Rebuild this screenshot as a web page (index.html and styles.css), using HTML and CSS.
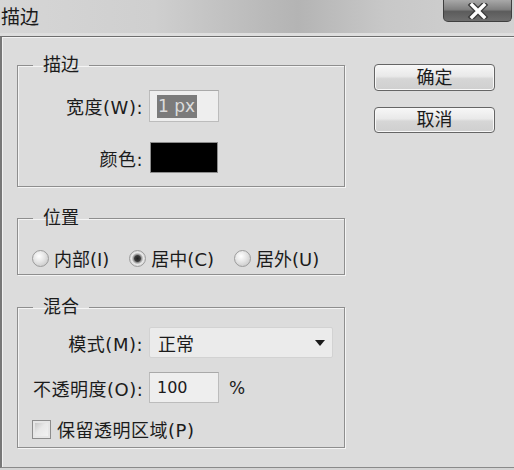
FILE: index.html
```html
<!DOCTYPE html>
<html lang="zh-CN">
<head>
    <meta charset="UTF-8">
    <meta name="viewport" content="width=device-width, initial-scale=1.0">
    <title>描边</title>
    <link rel="stylesheet" href="styles.css">
</head>
<body>
<div class="window">
    <div class="titlebar">
        <span class="title">描边</span>
        <span class="close-btn">
            <svg width="22" height="16" viewBox="0 0 22 16">
                <path d="M5 2 L17 14 M17 2 L5 14" stroke="#3a3a3a" stroke-width="6" stroke-linecap="square"/>
                <path d="M5 2 L17 14 M17 2 L5 14" stroke="#ffffff" stroke-width="3.4" stroke-linecap="square"/>
            </svg>
        </span>
    </div>

    <div class="dialog">
        <div class="groups">
            <fieldset class="group group-stroke">
                <legend>描边</legend>
                <div class="row row-width">
                    <span class="label">宽度(W):</span>
                    <span class="text-input"><span class="selected">1 px</span></span>
                </div>
                <div class="row row-color">
                    <span class="label">颜色:</span>
                    <span class="swatch"></span>
                </div>
            </fieldset>

            <fieldset class="group group-position">
                <legend>位置</legend>
                <div class="radios">
                    <span class="radio-item"><span class="radio"></span>内部(I)</span>
                    <span class="radio-item"><span class="radio checked"></span>居中(C)</span>
                    <span class="radio-item"><span class="radio"></span>居外(U)</span>
                </div>
            </fieldset>

            <fieldset class="group group-blend">
                <legend>混合</legend>
                <div class="row row-mode">
                    <span class="label">模式(M):</span>
                    <span class="select">正常<span class="arrow"></span></span>
                </div>
                <div class="row row-opacity">
                    <span class="label">不透明度(O):</span>
                    <span class="text-input">100</span>
                    <span class="unit">%</span>
                </div>
                <div class="check-row">
                    <span class="checkbox"></span>保留透明区域(P)
                </div>
            </fieldset>
        </div>

        <div class="buttons">
            <button class="btn btn-ok">确定</button>
            <button class="btn btn-cancel">取消</button>
        </div>
    </div>
</div>
</body>
</html>
```

FILE: styles.css
```css
body {
    margin: 0;
    background: #d4d4d4;
}

.window {
    width: 514px;
    height: 470px;
    font-family: "DejaVu Sans", "Noto Sans CJK SC", sans-serif;
    font-size: 18px;
    color: #1b1b1b;
    overflow: hidden;
}

/* title bar */
.titlebar {
    height: 36px;
    display: flex;
    justify-content: space-between;
    align-items: flex-start;
    background: linear-gradient(to right, #d6d6d6 0%, #cfcfcf 30%, #b9b9b9 52%, #b4b4b4 58%, #c8c8c8 75%, #d2d2d2 100%);
    box-shadow: inset 0 -3px 0 #dedede;
}

.title {
    font-size: 19px;
    line-height: 24px;
    padding: 5px 0 0 1px;
    letter-spacing: 0;
}

.close-btn {
    width: 67px;
    height: 21px;
    margin-right: 2px;
    display: flex;
    align-items: center;
    justify-content: center;
    border: 1px solid #3f3f3f;
    border-top: none;
    border-radius: 0 0 5px 5px;
    background: linear-gradient(#a8a8a8 0%, #808080 45%, #5c5c5c 55%, #6e6e6e 100%);
}

/* dialog body */
.dialog {
    width: 506px;
    height: 412px;
    display: flex;
    gap: 29px;
    padding: 18px 0 0 15px;
    box-sizing: content-box;
    border-top: 1px solid #6e6e6e;
    border-left: 2px solid #777;
    border-right: 2px solid #777;
    border-bottom: 1px solid #8a8a8a;
    background: #dcdcdc;
    box-shadow: inset 1px 1px 0 #f2f2f2;
}

.groups {
    width: 328px;
    display: flex;
    flex-direction: column;
}

.group {
    margin: 0;
    padding: 0 11px 0 15px;
    border: 1px solid #8e8e8e;
    box-shadow: 1px 1px 0 #f4f4f4, inset 1px 1px 0 #f4f4f4;
}

.group legend {
    padding: 0 10px;
    line-height: 20px;
    font-size: 18px;
}

.group-stroke {
    padding-top: 15px;
    padding-bottom: 13px;
}

.group-position {
    margin-top: 21px;
    padding-top: 18px;
    padding-bottom: 4px;
}

.group-blend {
    margin-top: 22px;
    padding-top: 10px;
    padding-bottom: 8px;
}

.row {
    display: flex;
    align-items: center;
    gap: 6px;
}

.row-color {
    margin-top: 20px;
}

.row-opacity {
    margin-top: 14px;
}

.label {
    width: 110px;
    text-align: right;
    white-space: nowrap;
    letter-spacing: 0.5px;
}

.text-input {
    width: 68px;
    height: 30px;
    display: flex;
    align-items: center;
    padding-left: 7px;
    box-sizing: border-box;
    width: 70px;
    height: 32px;
    font-size: 16px;
    background: #eeeeee;
    border: 1px solid #bcbcbc;
    border-top-color: #a9a9a9;
}

.row-opacity .text-input {
    height: 31px;
}

.selected {
    background: #7b7b7b;
    color: #dcdcdc;
    line-height: 23px;
    padding: 0 2px 0 1px;
    font-size: 17px;
}

.swatch {
    width: 66px;
    height: 29px;
    margin-left: 1px;
    background: #000;
    border: 1px solid #8c8c8c;
}

.unit {
    margin-left: 4px;
    font-size: 17px;
}

/* radios */
.radios {
    height: 24px;
    display: flex;
    align-items: center;
    margin-left: -1px;
}

.radio-item {
    display: flex;
    align-items: center;
    gap: 5px;
    margin-right: 20px;
    white-space: nowrap;
}

.radio-item:last-child {
    margin-right: 0;
}

.radio {
    width: 15px;
    height: 15px;
    border: 1px solid #9c9c9c;
    border-radius: 50%;
    background: radial-gradient(circle at 40% 35%, #ffffff 0%, #e4e4e4 45%, #bdbdbd 100%);
}

.radio.checked {
    background: radial-gradient(circle at 50% 50%, #202020 0%, #3c3c3c 28%, #8a8a8a 36%, #e8e8e8 55%, #c2c2c2 100%);
}

/* select */
.select {
    width: 184px;
    height: 31px;
    box-sizing: border-box;
    display: flex;
    align-items: center;
    justify-content: space-between;
    padding: 0 7px 0 8px;
    background: #ebebeb;
    border: 1px solid #d2d2d2;
    border-radius: 2px;
}

.arrow {
    width: 0;
    height: 0;
    border-left: 5px solid transparent;
    border-right: 5px solid transparent;
    border-top: 6px solid #1a1a1a;
}

/* checkbox */
.check-row {
    display: flex;
    align-items: center;
    gap: 6px;
    height: 20px;
    margin-top: 16px;
    margin-left: -1px;
    letter-spacing: 0.5px;
}

.checkbox {
    width: 17px;
    height: 17px;
    border: 1px solid #8c8c8c;
    background: linear-gradient(135deg, #bcbcbc 0%, #e8e8e8 45%, #f4f4f4 100%);
    box-shadow: inset 0 0 0 2px #e6e6e6;
}

/* buttons */
.buttons {
    display: flex;
    flex-direction: column;
    gap: 16px;
    padding-top: 9px;
}

.btn {
    width: 121px;
    height: 27px;
    padding: 0;
    font-family: inherit;
    font-size: 18px;
    line-height: 24px;
    color: #1b1b1b;
    border: 1px solid #656565;
    border-radius: 4px;
    background: linear-gradient(#f7f7f7 0%, #e9e9e9 45%, #d6d6d6 55%, #cfcfcf 100%);
    box-shadow: inset 0 0 0 1px #f8f8f8;
}

.btn-cancel {
    height: 26px;
}
```
